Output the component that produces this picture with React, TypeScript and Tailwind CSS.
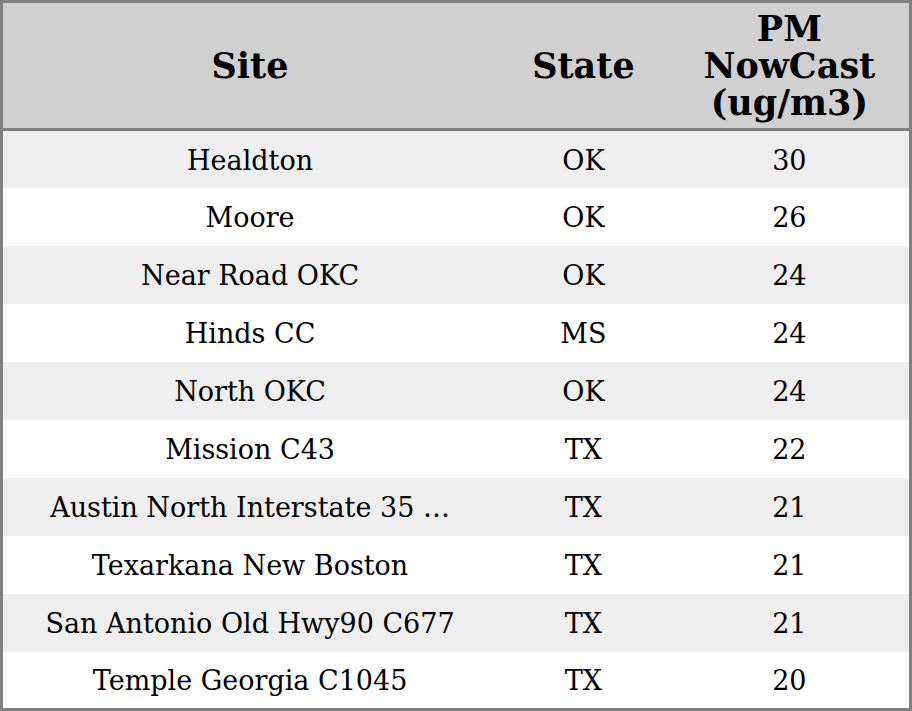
const rows: [string, string, number][] = [
  ['Healdton', 'OK', 30],
  ['Moore', 'OK', 26],
  ['Near Road OKC', 'OK', 24],
  ['Hinds CC', 'MS', 24],
  ['North OKC', 'OK', 24],
  ['Mission C43', 'TX', 22],
  ['Austin North Interstate 35 …', 'TX', 21],
  ['Texarkana New Boston', 'TX', 21],
  ['San Antonio Old Hwy90 C677', 'TX', 21],
  ['Temple Georgia C1045', 'TX', 20],
];

export default function App() {
  return (
    <div className="w-[912px] h-[711px] bg-white font-['DejaVu_Serif',serif] text-black">
      <table className="w-[912px] border-[3px] border-[#808080] border-collapse table-fixed">
        <colgroup>
          <col className="w-[494px]" />
          <col className="w-[172px]" />
          <col className="w-[240px]" />
        </colgroup>
        <thead>
          <tr className="h-[128px] bg-[#d0d0d0] border-b-[3px] border-[#808080]">
            <th className="text-[35px] font-bold leading-[37px] text-center align-middle">Site</th>
            <th className="text-[35px] font-bold leading-[37px] text-center align-middle">State</th>
            <th className="text-[35px] font-bold leading-[37px] text-center align-middle">
              PM
              <br />
              NowCast
              <br />
              (ug/m3)
            </th>
          </tr>
        </thead>
        <tbody>
          {rows.map(([site, state, pm], i) => (
            <tr key={site} className={`h-[58px] ${i % 2 === 0 ? 'bg-[#eeeeee]' : 'bg-white'}`}>
              <td className="pt-[3px] text-[27px] text-center align-middle whitespace-nowrap">{site}</td>
              <td className="pt-[3px] text-[27px] text-center align-middle">{state}</td>
              <td className="pt-[3px] text-[27px] text-center align-middle">{pm}</td>
            </tr>
          ))}
        </tbody>
      </table>
    </div>
  );
}
